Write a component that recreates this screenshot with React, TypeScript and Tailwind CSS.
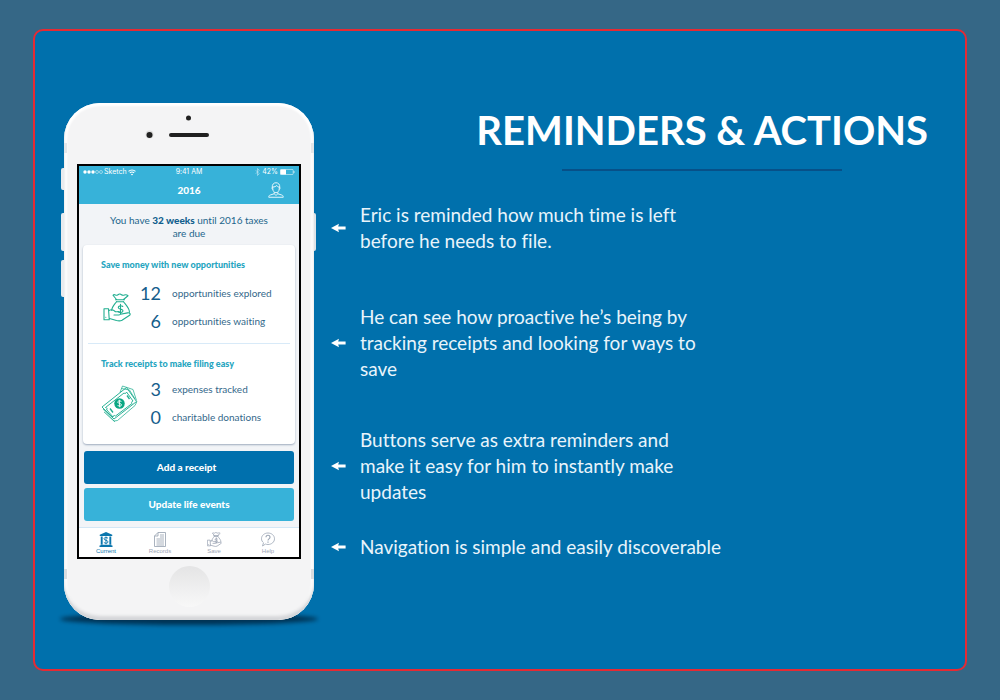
import type { ReactNode } from 'react';

function Arrow() {
  return (
    <svg className="h-[10px] w-[15px] shrink-0" viewBox="0 0 15 10" fill="#fff" aria-hidden="true">
      <path d="M0 5 8 .8 7.2 3.4H14.6V6.6H7.2L8 9.2Z" />
    </svg>
  );
}

function Caption({ className = '', children }: { className?: string; children: ReactNode }) {
  return (
    <li className={`flex items-center gap-[14px] ${className}`}>
      <Arrow />
      <p className="text-[19px] leading-[26px]">{children}</p>
    </li>
  );
}

function WifiIcon() {
  return (
    <svg className="h-[7px] w-[8px]" viewBox="0 0 16 13" fill="none" stroke="#fff" strokeWidth="2.2" aria-hidden="true">
      <path d="M1 4.4a10.4 10.4 0 0 1 14 0M3.7 7.4a6.4 6.4 0 0 1 8.6 0" />
      <path d="M8 12.4 5.7 9.8a3.6 3.6 0 0 1 4.6 0Z" fill="#fff" stroke="none" />
    </svg>
  );
}

function BluetoothIcon() {
  return (
    <svg className="h-[8px] w-[5px]" viewBox="0 0 10 16" fill="none" stroke="#bfe6f4" strokeWidth="1.3" aria-hidden="true">
      <path d="m1.5 4.5 7 7L5 15V1l3.5 3.5-7 7" />
    </svg>
  );
}

function BatteryIcon() {
  return (
    <svg className="h-[6px] w-[15px]" viewBox="0 0 15 6" aria-hidden="true">
      <rect x=".4" y=".4" width="12.8" height="5.2" rx="1" fill="none" stroke="#d6f0f8" strokeWidth=".7" />
      <rect x=".4" y=".4" width="5.600" height="5.200" rx=".6" fill="#fff" />
      <path d="M14 2v2" stroke="#d6f0f8" strokeWidth=".8" />
    </svg>
  );
}

function UserIcon() {
  return (
    <svg className="h-[16px] w-[16px]" viewBox="0 0 32 32" fill="none" stroke="#e6f6fb" strokeWidth="2" strokeLinejoin="round" aria-hidden="true">
      <path d="M8.500 11C8 4.500 11.500 1.500 16 1.500S24 4.500 23.500 11" />
      <path d="M9.500 10v3.500c0 4.500 3 8 6.500 8s6.500-3.500 6.500-8V10c-2.500 0-4-1.200-5-3-2 2-4.500 3-8 3Z" />
      <path d="M9.500 10.500c-2-.4-2 3.800.6 4.500M22.500 10.500c2-.4 2 3.800-.6 4.500" />
      <path d="M12.500 20.500v3L4.500 26C2.400 26.700 1.500 28 1.500 30.500h29c0-2.500-.9-3.800-3-4.500l-8-2.500v-3M12.500 23.500 16 27l3.500-3.500" />
    </svg>
  );
}

function MoneyBagIcon({ className, strokeWidth }: { className: string; strokeWidth: number }) {
  return (
    <svg className={className} viewBox="0 0 56 58" fill="none" stroke="currentColor" strokeWidth={strokeWidth} strokeLinecap="round" strokeLinejoin="round" aria-hidden="true">
      <path d="M27 13 20 4.500c3-3.500 5 .8 8 0s3-3.300 6-2.500 4 3.300 7 2.500 5-3 9 1L41 13" />
      <path d="M25 13.500h18M27 17.500h14" />
      <path d="M27 17.500C22 24 17.500 28 17.500 35M41 17.500c6 7.500 12 13 12 21" />
      <path d="M2 31.500h9l1.500 22H2ZM5.500 48.500h.2" />
      <path d="M12 35c5-3 9-1.500 13 2.500h6c5 0 6 5.500 1 6.500H22M35 42.500l14-2.700c5-1 7 2.800 3.500 5.200L38 54.500c-4 2-7 1.500-11 .5l-14-4" />
      <path d="M39.500 27c-2-2-9-2-9 1.800 0 4.500 9.500 2.400 9.500 6.700 0 4-7 4.500-10 1.500M35 22.500V41" />
    </svg>
  );
}

function CashIcon() {
  return (
    <svg className="h-[37px] w-[37px]" viewBox="0 0 74 74" fill="none" stroke="#21ae90" strokeWidth="1.9" strokeLinejoin="round" aria-hidden="true">
      <path d="M2 44 46 9 51 5 71 33 66 37 26 68Z" />
      <path d="M4 48 26 72 33 71 68 41 72 33M6 54 28 74M38 15 43 2 64 9 71 31M41 7 57 10 68 28" strokeWidth="1.500" />
      <path d="m9 45 37-29c2.500 2 4 1 5-2l13 18c-3 1-3.500 3-2 5L29 62c-2-2-5-1-5 2L11 49c3 0 2-3-2-4Z" />
      <path d="m18 47 6 8M52 21l5 7" strokeWidth="2.600" />
      <circle cx="37" cy="37" r="10.500" fill="#0ca783" stroke="none" />
      <path d="M41 33.500c-2-3-8-2-7.500 1 .5 3.200 7 1.600 7.500 5 .5 3.200-6 4-8 .5M36.500 29.500l1 15" stroke="#fff" strokeWidth="1.800" />
    </svg>
  );
}

function BankIcon() {
  return (
    <svg className="h-[15px] w-[14px]" viewBox="0 0 28 30" fill="#0b76ad" aria-hidden="true">
      <path d="M14 0 26.500 5.500V8h-25V5.500Z" />
      <path d="M3.500 9h3.800v16H3.500ZM20.700 9h3.800v16h-3.800ZM3 25.500h22V27h2v3H1v-3h2Z" />
      <path d="M18 12.500c-2-2.300-8-2.300-8 1 0 4 8 2.200 8 6.300 0 3.500-6 3.500-8.300 1M14 9v15.500" fill="none" stroke="#0b76ad" strokeWidth="1.800" />
    </svg>
  );
}

function RecordsIcon() {
  return (
    <svg className="h-[15px] w-[12px]" viewBox="0 0 24 30" fill="none" stroke="#9ba5b4" strokeWidth="1.700" strokeLinejoin="round" aria-hidden="true">
      <path d="M8 1h15v28H1V8ZM8 1v7H1M12 6h8M12 10h8M5 14h15M5 18h15M5 22h15M5 26h15" />
    </svg>
  );
}

function HelpIcon() {
  return (
    <svg className="h-[15px] w-[14px]" viewBox="0 0 28 30" fill="none" stroke="#9ba5b4" strokeWidth="1.600" strokeLinejoin="round" aria-hidden="true">
      <path d="M5 21.500C2.500 19.500 1 16.700 1 13.500 1 7 6.800 2 14 2s13 5 13 11.500S21.200 25 14 25c-1.800 0-3.500-.3-5-.9L3 28Z" />
      <path d="M10 10.500c0-5.300 8-5.300 8 0 0 3.500-4 3-4 6.500M14 19v2.500" strokeWidth="2.300" />
    </svg>
  );
}

function Stat({ value, label }: { value: string; label: string }) {
  return (
    <li className="flex h-7 items-center gap-[11px]">
      <span className="w-[22px] text-right text-[18px] leading-7 text-[#145d8b]">{value}</span>
      <span className="text-[10px] leading-7 text-[#33688a]">{label}</span>
    </li>
  );
}

function StatusBar() {
  return (
    <div className="grid grid-cols-3 items-center px-1 pt-[2px] text-[7px] leading-[8px] text-white font-['Inter',sans-serif]">
      <div className="flex items-center gap-[1px]">
        <svg className="h-[4px] w-[20px]" viewBox="0 0 20 4" fill="#fff" aria-hidden="true">
          <circle cx="2" cy="2" r="1.700" />
          <circle cx="6" cy="2" r="1.700" />
          <circle cx="10" cy="2" r="1.700" />
          <g fill="none" stroke="#d6f0f8" strokeWidth=".6">
            <circle cx="14" cy="2" r="1.500" />
            <circle cx="18" cy="2" r="1.500" />
          </g>
        </svg>
        <span>Sketch</span>
        <WifiIcon />
      </div>
      <span className="text-center">9:41 AM</span>
      <div className="flex items-center justify-end gap-[2px]">
        <BluetoothIcon />
        <span>42%</span>
        <BatteryIcon />
      </div>
    </div>
  );
}

function Tab({ label, active = false, children }: { label: string; active?: boolean; children: ReactNode }) {
  return (
    <a
      href="#"
      aria-current={active ? 'page' : undefined}
      className={`flex flex-col items-center gap-[1px] pt-[4px] text-[6px] leading-[7px] font-['Liberation_Sans',sans-serif] ${active ? 'text-[#0b76ad]' : 'text-[#9ba5b4]'}`}
    >
      {children}
      <span>{label}</span>
    </a>
  );
}

function Screen() {
  return (
    <div className="flex h-[395px] flex-col border-2 border-black bg-[#f2f4f7]">
      <header className="h-[38px] bg-[#37b2d9] text-white">
        <StatusBar />
        <div className="grid grid-cols-[1fr_auto_1fr] items-center px-[15px] pt-[6px]">
          <span />
          <h2 className="text-[10px] leading-4 font-black">2016</h2>
          <button type="button" aria-label="Profile" className="justify-self-end">
            <UserIcon />
          </button>
        </div>
      </header>
      <p className="px-6 pt-[10px] text-center text-[10px] leading-[13px] text-[#22668c]">
        You have <strong className="font-black text-[#125f8e]">32 weeks</strong> until 2016 taxes
        <br />
        are due
      </p>
      <div className="mx-1 mt-[5px] rounded-[4px] bg-white shadow-[0_1px_2px_#9eabbd]">
        <section className="mx-[5px] border-b border-[#d8eaf8] px-[13px] pt-[14px] pb-2">
          <h3 className="text-[9px] leading-3 font-black text-[#25a5c0]">Save money with new opportunities</h3>
          <div className="mt-2 flex items-center">
            <div className="w-[38px] pl-[2px] text-[#21ae90]">
              <MoneyBagIcon className="h-[29px] w-[28px]" strokeWidth={2.2} />
            </div>
            <ul>
              <Stat value="12" label="opportunities explored" />
              <Stat value="6" label="opportunities waiting" />
            </ul>
          </div>
        </section>
        <section className="mx-[5px] px-[13px] pt-[14px] pb-[13px]">
          <h3 className="text-[9px] leading-3 font-black text-[#25a5c0]">Track receipts to make filing easy</h3>
          <div className="mt-[5px] flex items-center">
            <div className="w-[38px]">
              <CashIcon />
            </div>
            <ul>
              <Stat value="3" label="expenses tracked" />
              <Stat value="0" label="charitable donations" />
            </ul>
          </div>
        </section>
      </div>
      <div className="mx-[5px] mt-[7px] flex flex-col gap-1 text-[10px] font-black text-white">
        <button type="button" className="h-[33px] rounded-[3px] bg-[#0070ad] pr-[5px]">Add a receipt</button>
        <button type="button" className="h-[33px] rounded-[3px] bg-[#37b2d9]">Update life events</button>
      </div>
      <nav className="mt-auto grid h-[30px] grid-cols-4 border-t border-[#d3e7f5] bg-white pr-1">
        <Tab label="Current" active><BankIcon /></Tab>
        <Tab label="Records"><RecordsIcon /></Tab>
        <Tab label="Save"><MoneyBagIcon className="h-[15px] w-[15px]" strokeWidth={3} /></Tab>
        <Tab label="Help"><HelpIcon /></Tab>
      </nav>
    </div>
  );
}

function Phone() {
  return (
    <div className="relative isolate w-[250px] shrink-0">
      <div className="absolute -inset-x-[4px] -bottom-[5px] -z-10 h-[12px] rounded-[50%] bg-[#00243f] opacity-80 blur-[2px]" />
      <div className="absolute top-[65px] -left-[3px] -z-10 h-[22px] w-[6px] rounded-[2px] bg-[#e8ebee]" />
      <div className="absolute top-[110px] -left-[3px] -z-10 h-[38px] w-[6px] rounded-[2px] bg-[#e8ebee]" />
      <div className="absolute top-[157px] -left-[3px] -z-10 h-[37px] w-[6px] rounded-[2px] bg-[#e8ebee]" />
      <div className="absolute top-[110px] -right-[2px] -z-10 h-[38px] w-[6px] rounded-[2px] bg-[#dfe3e7]" />
      <div className="rounded-[36px] bg-[#f4f4f5] px-[13px] shadow-[inset_0_-4px_3px_#d5d6d9,inset_0_0_2px_3px_#ffffff]">
        <svg className="h-[61px] w-full" viewBox="0 0 224 61" aria-hidden="true">
          <circle cx="111.500" cy="15" r="2.500" fill="#202020" />
          <circle cx="72.500" cy="31.500" r="4" fill="#dedede" />
          <circle cx="72.500" cy="32" r="3" fill="#202020" />
          <rect x="92" y="30" width="40" height="4" rx="2" fill="#202020" />
        </svg>
        <Screen />
        <div className="flex h-[61px] justify-center pt-[7px]">
          <button type="button" aria-label="Home" className="size-[41px] rounded-full bg-linear-to-b from-[#e4e4e5] to-[#f8f8f8]" />
        </div>
      </div>
      <div className="absolute top-[40px] left-0 h-[10px] w-[3px] bg-[#e2e5e8]" />
      <div className="absolute top-[40px] right-0 h-[10px] w-[3px] bg-[#e2e5e8]" />
      <div className="absolute bottom-[41px] left-0 h-[10px] w-[3px] bg-[#d9dcdf]" />
      <div className="absolute right-0 bottom-[41px] h-[10px] w-[3px] bg-[#d9dcdf]" />
    </div>
  );
}

export default function App() {
  return (
    <div className="flex min-h-screen bg-[#356786] px-[33px] py-[29px] font-['Lato',sans-serif] [font-variant-ligatures:none]">
      <main className="flex flex-1 items-start gap-[17px] rounded-[10px] border-2 border-[#e62a33] bg-[#0070ac] pr-[37px] pb-12 pl-[29px] text-white">
        <div className="pt-[72px]">
          <Phone />
        </div>
        <div className="flex-1 pt-[75px]">
          <div className="ml-auto flex w-fit flex-col items-center">
            <h1 className="text-[40px] leading-[48px] font-bold">REMINDERS &amp; ACTIONS</h1>
            <div className="mt-[15px] h-[2px] w-[280px] bg-[#075088]" />
          </div>
          <ul className="mt-[31px] text-[#e8f4fb]">
            <Caption className="max-w-[380px]">Eric is reminded how much time is left before he needs to file.</Caption>
            <Caption className="mt-[50px] max-w-[380px]">He can see how proactive he’s being by tracking receipts and looking for ways to save</Caption>
            <Caption className="mt-[45px] max-w-[380px]">Buttons serve as extra reminders and make it easy for him to instantly make updates</Caption>
            <Caption className="mt-[29px]">Navigation is simple and easily discoverable</Caption>
          </ul>
        </div>
      </main>
    </div>
  );
}
